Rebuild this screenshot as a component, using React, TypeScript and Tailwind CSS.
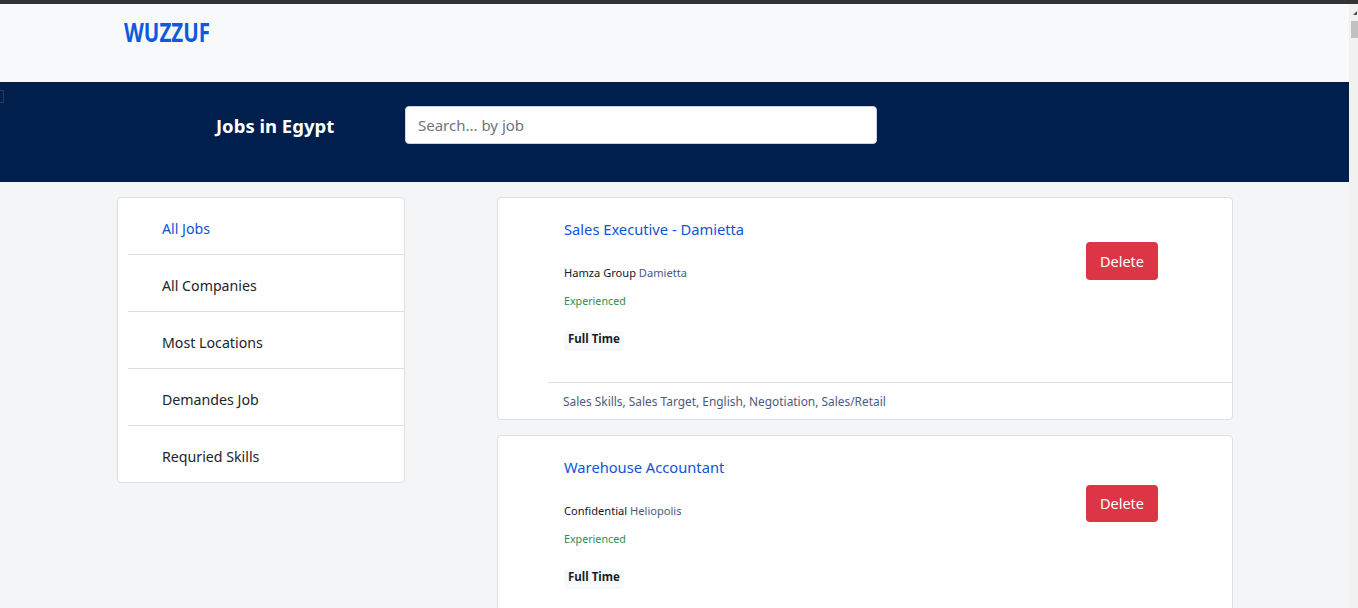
import React from 'react';

const MENU = ['All Jobs', 'All Companies', 'Most Locations', 'Demandes Job', 'Requried Skills'];

const JOBS = [
  { title: 'Sales Executive - Damietta', company: 'Hamza Group', city: 'Damietta', skills: 'Sales Skills, Sales Target, English, Negotiation, Sales/Retail', btn: 'mt-[44px] h-[38px] pt-[1px]' },
  { title: 'Warehouse Accountant', company: 'Confidential', city: 'Heliopolis', skills: '', btn: 'mt-[49px] h-[37px]' },
];

const JobCard = ({ job }: { job: (typeof JOBS)[number] }) => (
  <div className="h-[223px] shrink-0 bg-white border border-[#dfdfdf] rounded-[4px] flex flex-col">
    <div className="flex-1 flex justify-between pl-[66px] pr-[74px]">
      <div className="pt-[21px]">
        <div className="text-[14.7px] leading-[20px] text-[#0d54d8]">{job.title}</div>
        <div className="mt-[26px] text-[11.1px] leading-[16px] text-[#111827]">
          {job.company} <span className="text-[#4d5a7c]">{job.city}</span>
        </div>
        <div className="mt-[12px] text-[10.7px] leading-[16px] text-[#2e8b57]">Experienced</div>
        <div className="mt-[22px] block w-fit h-[20px] px-[4px] rounded-[4px] bg-[#f8f9fa] text-[11.5px] leading-[16px] font-bold text-[#1c1c28]">Full Time</div>
      </div>
      <div className={`${job.btn} w-[72px] bg-[#dc3545] rounded-[4px] text-white text-[14.5px] flex items-center justify-center`}>Delete</div>
    </div>
    <div className="ml-[50px] h-[37px] shrink-0 border-t border-[#dfdfdf] pl-[15px] pt-[2px] flex items-center text-[11.9px] text-[#4d5a7c]">{job.skills}</div>
  </div>
);

export default function App() {
  return (
    <div className="h-[608px] overflow-hidden flex flex-col bg-[#f4f5f7] font-['Noto_Sans','Open_Sans',sans-serif]">
      <div className="h-[4px] shrink-0 bg-[#333333]" />
      <div className="flex-1 flex min-h-0">
        <div className="flex-1 min-w-0 flex flex-col">
          <div className="h-[78px] shrink-0 bg-[#f8f9fa] pl-[124px] pt-[11px]">
            <span className="inline-block origin-left scale-x-[0.79] text-[26px] leading-[34px] font-bold text-[#0d5bdc]">WUZZUF</span>
          </div>
          <div className="relative h-[100px] shrink-0 bg-[#001f4d] flex items-center pl-[216px] pb-[14px]">
            {/* faint bracket at the left edge of the banner */}
            <div className="absolute left-0 top-[8px] w-[4px] h-[13px] border-y border-r border-[#2a3a52]" />
            <div className="w-[189px] pt-[2px] text-white text-[18.5px] font-bold">Jobs in Egypt</div>
            <div className="w-[472px] h-[38px] bg-white border border-[#ced4da] rounded-[4px] flex items-center px-[12px] text-[15px] text-[#6c757d]">Search... by job</div>
          </div>
          <div className="flex-1 min-h-0 flex items-start pt-[15px] pl-[117px]">
            <div className="w-[288px] shrink-0 bg-white border border-[#dfdfdf] rounded-[4px] pl-[10px]">
              {MENU.map((item, i) => (
                <div key={item} className={`pl-[34px] pt-[6px] flex items-center text-[14.2px] ${i === 0 ? 'text-[#0d54d8]' : 'text-[#212529]'} ${i < MENU.length - 1 ? 'h-[57px] border-b border-[#dfdfdf]' : 'h-[56px]'}`}>{item}</div>
              ))}
            </div>
            <div className="ml-[92px] w-[736px] shrink-0 flex flex-col gap-[15px]">
              {JOBS.map((job) => <JobCard key={job.title} job={job} />)}
            </div>
          </div>
        </div>
        <div className="w-[9px] shrink-0 bg-[#f1f1f1] pl-[2px] pt-[7px]">
          <svg width="7" height="10" viewBox="0 0 7 10" className="block">
            <polygon points="2,4 6,0 6,4" fill="#505050" />
          </svg>
          <div className="w-[7px] h-[17px] bg-[#c1c1c1]" />
        </div>
      </div>
    </div>
  );
}
